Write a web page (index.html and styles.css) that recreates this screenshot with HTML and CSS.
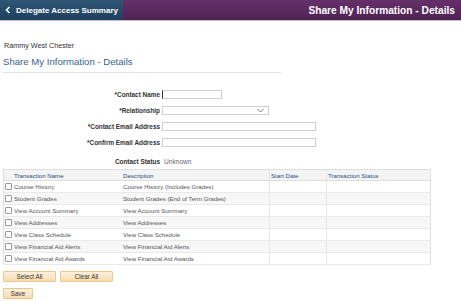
FILE: index.html
```html
<!DOCTYPE html>
<html lang="en">
<head>
  <meta charset="UTF-8" />
  <title>Share My Information - Details</title>
  <link rel="stylesheet" href="styles.css">
</head>
<body>

  <header class="topbar">
    <a href="#" class="back-btn">
      <svg width="6" height="8" viewBox="0 0 6 8"><path d="M4.5 1 L1.5 4 L4.5 7" fill="none" stroke="#fff" stroke-width="1.6"/></svg>
      Delegate Access Summary
    </a>
    <h1 class="page-title">Share My Information - Details</h1>
  </header>

  <div class="content">
    <div class="user-name">Rammy West Chester</div>
    <h2 class="section-title">Share My Information - Details</h2>

    <div class="form">
      <label class="form-label">*Contact Name</label>
      <div><input class="field field-name" type="text"></div>

      <label class="form-label">*Relationship</label>
      <div class="select-box">
        <svg width="7" height="5" viewBox="0 0 7 5"><path d="M0.5 1 L3.5 4 L6.5 1" fill="none" stroke="#666" stroke-width="0.9"/></svg>
      </div>

      <label class="form-label">*Contact Email Address</label>
      <div><input class="field field-wide" type="text"></div>

      <label class="form-label">*Confirm Email Address</label>
      <div><input class="field field-wide" type="text"></div>

      <label class="form-label status-label">Contact Status</label>
      <div class="status">Unknown</div>
    </div>

    <table class="grid">
      <thead>
        <tr>
          <th class="col-check"></th>
          <th class="col-name">Transaction Name</th>
          <th class="col-desc">Description</th>
          <th class="col-date">Start Date</th>
          <th class="col-status">Transaction Status</th>
        </tr>
      </thead>
      <tbody id="rows"></tbody>
    </table>

    <div class="btn-row btn-row-first">
      <button class="ps-btn btn-wide">Select All</button>
      <button class="ps-btn btn-wide">Clear All</button>
    </div>
    <div class="btn-row">
      <button class="ps-btn btn-save">Save</button>
    </div>
  </div>

  <script>
    const items = [
      ['Course History', 'Course History (Includes Grades)'],
      ['Student Grades', 'Student Grades (End of Term Grades)'],
      ['View Account Summary', 'View Account Summary'],
      ['View Addresses', 'View Addresses'],
      ['View Class Schedule', 'View Class Schedule'],
      ['View Financial Aid Alerts', 'View Financial Aid Alerts'],
      ['View Financial Aid Awards', 'View Financial Aid Awards']
    ];
    const rowsEl = document.getElementById('rows');
    rowsEl.innerHTML = items.map(([name, desc]) => `
      <tr>
        <td class="col-check"><span class="checkbox"></span></td>
        <td>${name}</td>
        <td>${desc}</td>
        <td></td>
        <td></td>
      </tr>`).join('');
  </script>
</body>
</html>
```

FILE: styles.css
```css
body {
  font-family: 'Liberation Sans', Arial, sans-serif;
  margin: 0;
  padding: 0;
  background: #fff;
  color: #333;
}

.topbar {
  height: 20px;
  display: flex;
  justify-content: space-between;
  align-items: center;
  background: linear-gradient(to bottom, #66306a, #4e2352);
  border-bottom: 1px solid #c9b8cc;
}

.back-btn {
  height: 20px;
  width: 123px;
  box-sizing: border-box;
  padding-left: 5px;
  display: flex;
  align-items: center;
  gap: 5px;
  white-space: nowrap;
  text-decoration: none;
  color: #fff;
  font-size: 8px;
  font-weight: bold;
  background: linear-gradient(to bottom, #2f5676, #1f405e);
}

.page-title {
  margin: 0 6px 0 0;
  font-size: 10.2px;
  font-weight: bold;
  color: #fff;
}

.content {
  padding: 0 3px;
}

.user-name {
  margin: 20px 0 0 1px;
  font-size: 7.2px;
  color: #333;
}

.section-title {
  margin: 6px 0 0 0;
  padding-bottom: 5px;
  width: 278px;
  border-bottom: 1px solid #e2e2e2;
  font-size: 9.6px;
  font-weight: normal;
  color: #3a5f8e;
}

.form {
  display: grid;
  grid-template-columns: 157px 1fr;
  column-gap: 2px;
  row-gap: 7px;
  align-items: center;
  margin-top: 17px;
}

.form-label {
  text-align: right;
  font-size: 6.4px;
  font-weight: bold;
  color: #333;
}

.field {
  display: block;
  height: 9px;
  box-sizing: border-box;
  margin: 0;
  padding: 0;
  border: 1px solid #cfcfcf;
  background: #fff;
}

.field-name {
  width: 60px;
  border-left: 1px solid #333;
}

.field-wide {
  width: 154px;
}

.select-box {
  width: 107px;
  height: 9px;
  box-sizing: border-box;
  border: 1px solid #cfcfcf;
  display: flex;
  justify-content: flex-end;
  align-items: center;
  padding-right: 4px;
}

.status {
  font-size: 6.6px;
  color: #666;
  margin-top: 4px;
  padding-left: 2px;
}

.status-label {
  margin-top: 4px;
}

.grid {
  margin-top: 4px;
  width: 428px;
  border-collapse: collapse;
  border: 1px solid #dedede;
  font-size: 6.1px;
}

.grid th {
  height: 10px;
  padding: 0 1px;
  text-align: left;
  font-weight: normal;
  color: #2b4a75;
  background: #f4f4f4;
  border-bottom: 1px solid #dedede;
}

.grid td {
  height: 11px;
  padding: 0 1px;
  color: #555;
  border-bottom: 1px solid #eaeaea;
}

.grid tbody tr:nth-child(even) td {
  background: #f7f7f7;
}

.grid .col-date,
.grid tr td:nth-child(4) {
  border-left: 1px solid #e6e6e6;
}

.grid .col-status,
.grid tr td:nth-child(5) {
  border-left: 1px solid #e6e6e6;
}

.col-check {
  width: 6px;
}

.col-name {
  width: 107px;
}

.col-desc {
  width: 145px;
}

.col-date {
  width: 54px;
}

.checkbox {
  display: block;
  width: 5px;
  height: 5px;
  border: 1px solid #999;
  border-radius: 1px;
  background: #fff;
}

.btn-row {
  display: flex;
  gap: 4px;
}

.btn-row-first {
  margin-top: 6px;
}

.ps-btn {
  height: 11px;
  padding: 0;
  font-family: inherit;
  font-size: 6.3px;
  color: #333;
  border: 1px solid #edc68e;
  border-radius: 1px;
  background: linear-gradient(to bottom, #fdf0dc, #f9dcb0);
}

.btn-wide {
  width: 53px;
}

.btn-save {
  width: 30px;
  margin-top: 6px;
}
```
